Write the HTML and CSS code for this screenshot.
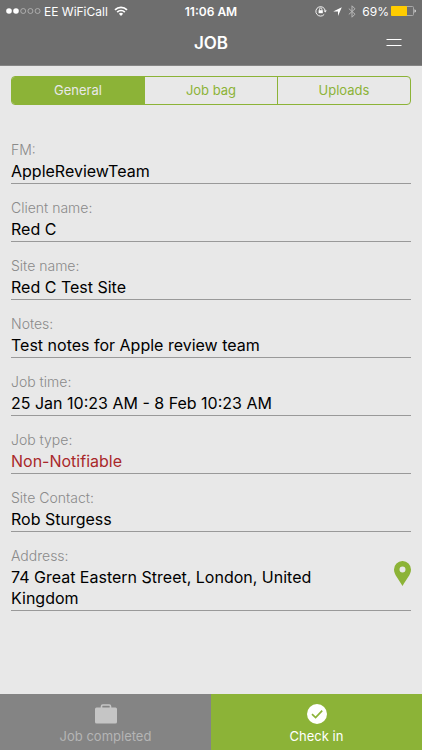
FILE: index.html
```html
<!DOCTYPE html>
<html lang="en">
<head>
    <meta charset="UTF-8">
    <meta name="viewport" content="width=device-width, initial-scale=1.0">
    <title>Job</title>
    <link rel="stylesheet" href="styles.css">
</head>
<body>
    <header class="header">
        <div class="status-bar">
            <div class="status-left">
                <svg width="35" height="8" viewBox="0 0 35 8">
                    <g fill="#fff">
                        <circle cx="3" cy="4" r="2.8"/>
                        <circle cx="10" cy="4" r="2.8"/>
                    </g>
                    <g fill="none" stroke="#c4c4c4" stroke-width="0.7">
                        <circle cx="17.2" cy="4" r="2.5"/>
                        <circle cx="24.4" cy="4" r="2.5"/>
                        <circle cx="31.6" cy="4" r="2.5"/>
                    </g>
                </svg>
                <span>EE WiFiCall</span>
                <svg class="wifi" width="14" height="10" viewBox="0 0 14 10">
                    <g fill="none" stroke="#fff" stroke-width="1.7">
                        <path d="M1 3.8a8.4 8.4 0 0 1 12 0"/>
                        <path d="M3.2 6.1a5.3 5.3 0 0 1 7.6 0"/>
                    </g>
                    <path d="M7 10L4.9 7.8a3 3 0 0 1 4.2 0z" fill="#fff"/>
                </svg>
            </div>
            <div class="status-time">11:06 AM</div>
            <div class="status-right">
                <svg width="12" height="12" viewBox="0 0 12 12">
                    <path d="M9.2 9.4A4.7 4.7 0 1 1 10.2 5.6" fill="none" stroke="#fff" stroke-width="0.9"/>
                    <path d="M8.6 5.4h3.2l-1.6 2.2z" fill="#fff"/>
                    <path d="M3.6 5.2h4.2v3H3.6z" fill="#fff"/>
                    <path d="M4.5 5.4V4.2a1.2 1.2 0 0 1 2.4 0v1.2" fill="none" stroke="#fff" stroke-width="0.8"/>
                </svg>
                <svg width="9" height="9" viewBox="0 0 9 9">
                    <path d="M8.8 0.2L5 9V4.5H0.2z" fill="#fff"/>
                </svg>
                <svg width="8" height="13" viewBox="0 0 8 13">
                    <path d="M0.8 3.6L7 9.2L4 12.2V0.8L7 3.8L0.8 9.4" fill="none" stroke="#b8b8b8" stroke-width="1"/>
                </svg>
                <span class="battery-level">69%</span>
                <svg width="25" height="10" viewBox="0 0 25 10">
                    <rect x="0.5" y="0.5" width="22" height="9" rx="1" fill="none" stroke="#a8a8a8"/>
                    <rect x="0" y="0" width="16" height="10" rx="1" fill="#fc0"/>
                    <path d="M23.6 3.2a2 2 0 0 1 0 3.6z" fill="#fff"/>
                </svg>
            </div>
        </div>
        <div class="nav-bar">
            <h1>JOB</h1>
            <button class="menu-btn" aria-label="Menu">
                <svg width="16" height="8" viewBox="0 0 16 8">
                    <path d="M0.5 0.500h15M0.500 6.500h15" stroke="#fff" stroke-width="1.2"/>
                </svg>
            </button>
        </div>
    </header>

    <main class="content">
        <nav class="tabs">
            <button class="tab active">General</button>
            <button class="tab">Job bag</button>
            <button class="tab">Uploads</button>
        </nav>

        <dl class="fields">
            <div class="field">
                <dt>FM:</dt>
                <dd>AppleReviewTeam</dd>
            </div>
            <div class="field">
                <dt>Client name:</dt>
                <dd>Red C</dd>
            </div>
            <div class="field">
                <dt>Site name:</dt>
                <dd>Red C Test Site</dd>
            </div>
            <div class="field">
                <dt>Notes:</dt>
                <dd>Test notes for Apple review team</dd>
            </div>
            <div class="field">
                <dt>Job time:</dt>
                <dd>25 Jan 10:23 AM - 8 Feb 10:23 AM</dd>
            </div>
            <div class="field">
                <dt>Job type:</dt>
                <dd class="alert">Non-Notifiable</dd>
            </div>
            <div class="field">
                <dt>Site Contact:</dt>
                <dd>Rob Sturgess</dd>
            </div>
            <div class="field address">
                <dt>Address:</dt>
                <dd>74 Great Eastern Street, London, United Kingdom</dd>
                <dd class="map">
                    <button aria-label="Show on map">
                        <svg width="17" height="25" viewBox="0 0 17 25">
                            <path d="M8.500 0A8.400 8.400 0 0 0 0 8.400C0 13.500 4.600 18 8.500 25C12.400 18 17 13.500 17 8.400A8.400 8.400 0 0 0 8.500 0zM8.500 5.500a3 3 0 1 1 0 6a3 3 0 1 1 0-6z" fill="#8cb337" fill-rule="evenodd"/>
                        </svg>
                    </button>
                </dd>
            </div>
        </dl>
    </main>

    <footer class="actions">
        <button class="action completed">
            <svg width="24" height="20" viewBox="0 0 24 20">
                <rect x="1" y="3.5" width="22" height="16" rx="1.5" fill="#c5c5c5"/>
                <path d="M7.500 4V2.300Q7.500 1 8.800 1H15.200Q16.500 1 16.500 2.300V4" fill="none" stroke="#c5c5c5" stroke-width="1.6"/>
            </svg>
            <span>Job completed</span>
        </button>
        <button class="action check-in">
            <svg width="22" height="20" viewBox="0 0 22 20">
                <circle cx="11" cy="10" r="10" fill="#fff"/>
                <path d="M6 10.200l3.600 3.400l6.600-6.900" fill="none" stroke="#8cb337" stroke-width="1.7"/>
            </svg>
            <span>Check in</span>
        </button>
    </footer>
</body>
</html>
```
FILE: styles.css
```css
* {
    box-sizing: border-box;
}

body {
    margin: 0;
    min-height: 100vh;
    display: flex;
    flex-direction: column;
    font-family: Inter, "Liberation Sans", sans-serif;
    background: #e8e8e8;
    color: #000;
}

button {
    margin: 0;
    padding: 0;
    border: none;
    background: none;
    font-family: inherit;
    cursor: pointer;
}

svg {
    display: block;
    flex-shrink: 0;
}

.header {
    background: #6e6e6e;
    border-bottom: 1px solid #858585;
    color: #fff;
}

.status-bar {
    display: grid;
    grid-template-columns: 1fr auto 1fr;
    align-items: center;
    height: 22px;
    padding: 0 6px;
    font-size: 12px;
    white-space: nowrap;
}

.status-left,
.status-right {
    display: flex;
    align-items: center;
    gap: 3px;
}

.wifi {
    margin-left: 3px;
}

.status-time {
    font-weight: 600;
}

.status-right {
    justify-content: flex-end;
    gap: 6px;
}

.battery-level {
    margin-right: -4px;
}

.nav-bar {
    display: grid;
    grid-template-columns: 1fr auto 1fr;
    align-items: center;
    height: 43px;
    padding: 0 20px 2px;
}

.nav-bar h1 {
    grid-column: 2;
    margin: 0;
    font-size: 17px;
    font-weight: 600;
}

.menu-btn {
    justify-self: end;
}

.content {
    flex: 1;
    padding: 10px 11px;
}

.tabs {
    display: flex;
    height: 29px;
    border: 1px solid #8cb337;
    border-radius: 4px;
    overflow: hidden;
}

.tab {
    flex: 1;
    padding-bottom: 1px;
    color: #8cb337;
    font-size: 13px;
}

.tab + .tab {
    border-left: 1px solid #8cb337;
}

.tab.active {
    background: #8cb337;
    color: #e8e8e8;
}

.fields {
    display: flex;
    flex-direction: column;
    gap: 15px;
    margin: 36px 0 0;
}

.field {
    padding-bottom: 1px;
    border-bottom: 1px solid #999;
}

.field dt {
    margin-bottom: 2px;
    color: #8a8a8a;
    font-size: 14px;
    font-weight: 300;
    line-height: 18px;
}

.field dd {
    margin: 0;
    font-size: 16px;
    line-height: 21px;
}

.field .alert {
    color: #a9282b;
}

.address {
    display: grid;
    grid-template-columns: 1fr auto;
    column-gap: 50px;
}

.address .map {
    grid-column: 2;
    grid-row: 1 / 3;
    padding-top: 14px;
}

.actions {
    display: flex;
    height: 56px;
}

.action {
    flex: 1;
    display: flex;
    flex-direction: column;
    align-items: center;
    gap: 4px;
    padding-top: 10px;
    font-size: 13px;
    line-height: 16px;
}

.completed {
    background: #848484;
    color: #b5b5b5;
}

.check-in {
    background: #8cb337;
    color: #fff;
}
```
